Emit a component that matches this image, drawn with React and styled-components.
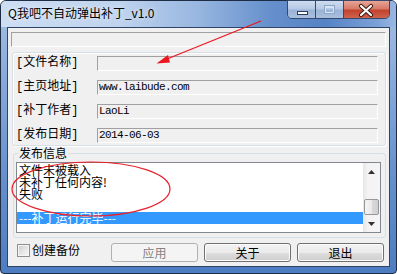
import React from 'react';
import styled, { createGlobalStyle } from 'styled-components';

const GlobalStyle = createGlobalStyle`
  html, body {
    margin: 0;
    padding: 0;
    background: #fff;
  }
  body {
    font-family: "Noto Sans CJK SC", sans-serif;
    font-size: 12px;
    color: #000;
  }
`;

const fields = [
  { label: '文件名称', value: '' },
  { label: '主页地址', value: 'www.laibude.com' },
  { label: '补丁作者', value: 'LaoLi' },
  { label: '发布日期', value: '2014-06-03' },
];

const logLines = [
  { text: '文件未被载入' },
  { text: '未补丁任何内容!' },
  { text: '失败' },
  { text: '' },
  { text: '---补丁运行完毕---', selected: true },
];

const App = () => {
  return (
    <Screen>
      <GlobalStyle />
      <Window>
        <TitleBar>
          <Title>Q我吧不自动弹出补丁_v1.0</Title>
          <Caption>
            <CapButton $w={27}>
              <svg width="27" height="18">
                <rect x="9.5" y="10.5" width="10" height="3" fill="#fff" stroke="#2b3c59" />
              </svg>
            </CapButton>
            <CapButton $w={28}>
              <svg width="27" height="18">
                <rect x="8.5" y="4.5" width="10" height="8" fill="none" stroke="#8fa6c6" />
                <rect x="9.5" y="5.5" width="8" height="6" fill="none" stroke="#d9e4f2" strokeWidth="1" />
                <line x1="9" y1="6" x2="18" y2="6" stroke="#d9e4f2" strokeWidth="2" />
              </svg>
            </CapButton>
            <CapButton $w={46} $close>
              <svg width="45" height="18">
                <path d="M17 5 L27 14 M27 5 L17 14" stroke="#3b1c18" strokeWidth="4.2" strokeLinecap="round" />
                <path d="M17 5 L27 14 M27 5 L17 14" stroke="#fff" strokeWidth="2.2" strokeLinecap="round" />
              </svg>
            </CapButton>
          </Caption>
        </TitleBar>
        <Client>
          <TopBox />
          <InfoGroup>
            {fields.map(f => (
              <React.Fragment key={f.label}>
                <Label>[{f.label}]</Label>
                <Field>{f.value}</Field>
              </React.Fragment>
            ))}
          </InfoGroup>
          <LogGroup>
            <Legend>发布信息</Legend>
            <ListBox>
              <Rows>
                {logLines.map((line, idx) => (
                  <Row key={idx} $selected={line.selected}>{line.text}</Row>
                ))}
              </Rows>
              <ScrollBar>
                <ScrollArrow>
                  <svg width="7" height="4"><polygon points="0,4 7,4 3.5,0" fill="#333" /></svg>
                </ScrollArrow>
                <Track>
                  <Thumb />
                </Track>
                <ScrollArrow>
                  <svg width="7" height="4"><polygon points="0,0 7,0 3.5,4" fill="#333" /></svg>
                </ScrollArrow>
              </ScrollBar>
            </ListBox>
          </LogGroup>
          <BottomBar>
            <CheckLabel>
              <CheckBox />
              创建备份
            </CheckLabel>
            <ButtonGroup>
              <Button disabled>应用</Button>
              <Button>关于</Button>
              <Button>退出</Button>
            </ButtonGroup>
          </BottomBar>
        </Client>
      </Window>
      {/* red annotations drawn on top of the screenshot */}
      <Marks width="397" height="274">
        <line x1="261" y1="21" x2="167" y2="59" stroke="#f0141e" strokeWidth="1.2" />
        <polygon points="156.5,63.5 168,55 170,62.5" fill="#f0141e" />
        <ellipse cx="91" cy="189" rx="79" ry="27" fill="none" stroke="#e8202a" strokeWidth="1.2" />
      </Marks>
    </Screen>
  );
};

const Screen = styled.div`
  position: relative;
  width: 397px;
  height: 274px;
`;

const Window = styled.div`
  width: 397px;
  height: 274px;
  box-sizing: border-box;
  border: 1px solid #1e2c44;
  border-radius: 6px 6px 4px 4px;
  background: linear-gradient(180deg, #a6c0e4 0%, #86a9d9 30%, #6690cc 65%, #4d7dc1 100%);
  display: flex;
  flex-direction: column;
`;

const TitleBar = styled.div`
  height: 26px;
  flex-shrink: 0;
  display: flex;
  align-items: flex-start;
  justify-content: space-between;
  padding: 0 6px 0 7px;
  border-radius: 5px 5px 0 0;
  background: linear-gradient(90deg, #cddef3 0%, #bfd3ee 30%, #97b6e0 50%, #6690cc 68%, #5683c5 82%, #7aa0d6 95%, #9ab8e2 100%);
`;

const Title = styled.div`
  margin-top: 5px;
  font-size: 12px;
  line-height: 14px;
  text-shadow: 0 0 5px rgba(255, 255, 255, 0.9);
`;

const Caption = styled.div`
  display: flex;
  margin-top: -1px;
  height: 19px;
  box-sizing: border-box;
  border: 1px solid #34496b;
  border-radius: 0 0 5px 5px;
  overflow: hidden;
`;

const CapButton = styled.div`
  width: ${p => p.$w}px;
  box-sizing: border-box;
  display: flex;
  align-items: flex-start;
  justify-content: center;
  background: ${p => p.$close
    ? 'linear-gradient(180deg, #e7a598 0%, #d77a68 45%, #c2432f 55%, #d0634c 100%)'
    : 'linear-gradient(180deg, #cfdcef 0%, #b7cae5 45%, #9bb3d6 55%, #a9c0e0 100%)'};
  & + & {
    border-left: 1px solid #34496b;
  }
`;

const Client = styled.div`
  flex: 1;
  margin: 0 6px 6px;
  border: 1px solid #2f4466;
  background: #f0f0f0;
  display: flex;
  flex-direction: column;
`;

const TopBox = styled.div`
  margin: 4px 0 0 3px;
  width: 375px;
  height: 15px;
  box-sizing: border-box;
  border-top: 1px solid #a0a0a0;
  border-left: 1px solid #a0a0a0;
  border-bottom: 1px solid #fff;
  border-right: 1px solid #fff;
`;

const InfoGroup = styled.div`
  margin: 5px 0 0 4px;
  width: 374px;
  height: 94px;
  box-sizing: border-box;
  border: 1px solid #d5dfe5;
  border-radius: 3px;
  box-shadow: inset 1px 1px 0 #fff, 1px 1px 0 #fff;
  padding: 3px 6px 2px 3px;
  display: grid;
  grid-template-columns: 81px 281px;
  grid-template-rows: repeat(4, 15px);
  row-gap: 9px;
  align-items: center;
`;

const Label = styled.div`
  font-family: "Liberation Mono", "Noto Sans CJK SC", monospace;
  font-size: 12px;
  line-height: 15px;
  white-space: nowrap;
`;

const Field = styled.div`
  height: 15px;
  box-sizing: border-box;
  border-top: 1px solid #a0a0a0;
  border-left: 1px solid #a0a0a0;
  border-bottom: 1px solid #fff;
  border-right: 1px solid #fff;
  padding-left: 1px;
  font-family: "Liberation Mono", monospace;
  font-size: 11px;
  letter-spacing: -0.6px;
  line-height: 13px;
  white-space: nowrap;
`;

const LogGroup = styled.fieldset`
  margin: 1px 0 0 5px;
  width: 373px;
  min-width: 0;
  box-sizing: border-box;
  padding: 3px 4px 4px 2px;
  border: 1px solid #d5dfe5;
  border-radius: 3px;
`;

const Legend = styled.legend`
  padding: 0 1px;
  margin-left: 2px;
  font-size: 12px;
  line-height: 12px;
`;

const ListBox = styled.div`
  height: 71px;
  box-sizing: border-box;
  border: 1px solid #828790;
  background: #fff;
  display: flex;
`;

const Rows = styled.div`
  flex: 1;
  padding-top: 1px;
`;

const Row = styled.div`
  height: 12px;
  line-height: 12px;
  padding-left: 2px;
  font-size: 12px;
  white-space: nowrap;
  background: ${p => (p.$selected ? '#3399ff' : 'transparent')};
  color: ${p => (p.$selected ? '#fff' : '#000')};
`;

const ScrollBar = styled.div`
  width: 17px;
  display: flex;
  flex-direction: column;
  background: linear-gradient(90deg, #e6e6e6 0%, #f4f4f4 30%, #f4f4f4 100%);
`;

const ScrollArrow = styled.div`
  height: 17px;
  display: flex;
  align-items: center;
  justify-content: center;
`;

const Track = styled.div`
  flex: 1;
  display: flex;
  flex-direction: column;
  justify-content: flex-end;
`;

const Thumb = styled.div`
  height: 16px;
  margin: 0 1px;
  box-sizing: border-box;
  border: 1px solid #979797;
  border-radius: 2px;
  background: linear-gradient(90deg, #f4f4f4 0%, #eaeaea 50%, #dadada 51%, #cfcfcf 100%);
`;

const BottomBar = styled.div`
  margin-top: 5px;
  height: 19px;
  display: flex;
  align-items: flex-start;
  padding: 0 5px 0 9px;
`;

const CheckLabel = styled.label`
  display: flex;
  align-items: center;
  gap: 2px;
  font-size: 12px;
  line-height: 14px;
`;

const CheckBox = styled.span`
  width: 13px;
  height: 13px;
  box-sizing: border-box;
  border: 1px solid #8e8f8f;
  background: linear-gradient(135deg, #cbcbcb 0%, #e6e6e6 55%, #f6f6f6 100%);
  box-shadow: inset 0 0 0 1px #f4f4f4;
`;

const ButtonGroup = styled.div`
  margin-left: auto;
  display: flex;
  gap: 6px;
`;

const Button = styled.button`
  width: 87px;
  height: 19px;
  padding: 0;
  box-sizing: border-box;
  border: 1px solid #707070;
  border-radius: 3px;
  background: linear-gradient(180deg, #f2f2f2 0%, #ebebeb 50%, #dddddd 51%, #cfcfcf 100%);
  box-shadow: inset 0 0 0 1px #fcfcfc;
  font-family: "Noto Sans CJK SC", sans-serif;
  font-size: 12px;
  line-height: 15px;
  color: #000;

  &:disabled {
    border-color: #adb2b5;
    background: #f4f4f4;
    box-shadow: none;
    color: #838383;
  }
`;

const Marks = styled.svg`
  position: absolute;
  top: 0;
  left: 0;
  pointer-events: none;
`;

export default App;
